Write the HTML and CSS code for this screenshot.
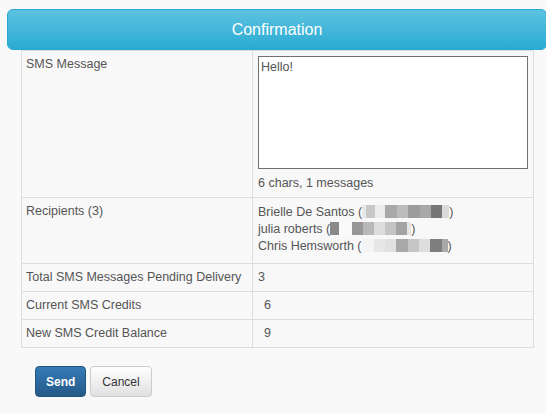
FILE: index.html
```html
<!DOCTYPE html>
<html>
<head>
<meta charset="utf-8">
<link rel="stylesheet" href="styles.css">
</head>
<body>
<div class="page">
  <div class="header">Confirmation</div>
  <table class="details">
    <tr>
      <td class="label">SMS Message</td>
      <td class="value">
        <textarea class="message">Hello!</textarea>
        <div class="count">6 chars, 1 messages</div>
      </td>
    </tr>
    <tr>
      <td class="label">Recipients (3)</td>
      <td class="value recipients">
        <div class="recipient">Brielle De Santos (<span class="blur"><i class="b1"></i><i class="b2"></i><i class="b3"></i><i class="b4"></i><i class="b5"></i><i class="b6"></i><i class="b7"></i><i class="b8"></i><i class="b9"></i></span>)</div>
        <div class="recipient">julia roberts (<span class="blur"><i class="j1"></i><i class="j2"></i><i class="j3"></i><i class="j4"></i><i class="j5"></i><i class="j6"></i><i class="j7"></i><i class="j8"></i></span>)</div>
        <div class="recipient">Chris Hemsworth (<span class="blur"><i class="c1"></i><i class="c2"></i><i class="c3"></i><i class="c4"></i><i class="c5"></i><i class="c6"></i><i class="c7"></i><i class="c8"></i></span>)</div>
      </td>
    </tr>
    <tr>
      <td class="label">Total SMS Messages Pending Delivery</td>
      <td class="value">3</td>
    </tr>
    <tr>
      <td class="label">Current SMS Credits</td>
      <td class="value indent">6</td>
    </tr>
    <tr>
      <td class="label">New SMS Credit Balance</td>
      <td class="value indent">9</td>
    </tr>
  </table>
  <div class="actions">
    <button class="btn btn-primary">Send</button>
    <button class="btn btn-default">Cancel</button>
  </div>
</div>
</body>
</html>
```

FILE: styles.css
```css
html, body {
  margin: 0;
  padding: 0;
  overflow: hidden;
  background: #f9f9f9;
}

.page {
  font-family: "Liberation Sans", Arial, sans-serif;
  font-size: 12.5px;
  line-height: 17px;
  color: #555;
  padding-top: 9px;
}

.header {
  margin-left: 7px;
  width: 540px;
  height: 41px;
  box-sizing: border-box;
  border: 1px solid #28a7cf;
  border-radius: 6px;
  background: linear-gradient(#5dc2e0, #2aabd3);
  color: #fff;
  font-size: 16px;
  line-height: 39px;
  text-align: center;
}

.details {
  margin-left: 21px;
  width: 513px;
  border-collapse: collapse;
  background: #f8f8f8;
}

.details td {
  border: 1px solid #ddd;
  padding: 5px;
  vertical-align: top;
}

.details td.label {
  width: 221px;
  padding-left: 4px;
}

.details td.indent {
  padding-left: 11px;
}

.details td.recipients {
  padding-top: 6px;
  padding-bottom: 8px;
}

.recipient {
  height: 17px;
  line-height: 17px;
}

.message {
  display: block;
  width: 100%;
  height: 113px;
  box-sizing: border-box;
  margin: 0 0 6px;
  padding: 2px;
  border: 1px solid #707070;
  background: #fff;
  font-family: "Liberation Sans", Arial, sans-serif;
  font-size: 12.5px;
  line-height: 17px;
  color: #555;
  resize: none;
}

.blur {
  display: inline-flex;
  vertical-align: -2px;
  height: 13px;
}

.blur i {
  display: block;
  height: 13px;
}

.b1 { width: 4px; background: #e9e9e9; }
.b2 { width: 9px; background: #c8c8c8; }
.b3 { width: 10px; background: #ededed; }
.b4 { width: 12px; background: #a9a9a9; }
.b5 { width: 11px; background: #bcbcbc; }
.b6 { width: 12px; background: #9c9c9c; }
.b7 { width: 11px; background: #a8a8a8; }
.b8 { width: 11px; background: #777; }
.b9 { width: 7px; background: #dadada; }

.j1 { width: 9px; background: #8a8a8a; }
.j2 { width: 13px; background: #fafafa; }
.j3 { width: 11px; background: #979797; }
.j4 { width: 11px; background: #b8b8b8; }
.j5 { width: 11px; background: #dcdcdc; }
.j6 { width: 11px; background: #c4c4c4; }
.j7 { width: 11px; background: #a3a3a3; }
.j8 { width: 4px; background: #e4e4e4; }

.c1 { width: 12px; background: #f4f4f4; }
.c2 { width: 11px; background: #e7e7e7; }
.c3 { width: 11px; background: #e1e1e1; }
.c4 { width: 12px; background: #a8a8a8; }
.c5 { width: 11px; background: #c6c6c6; }
.c6 { width: 11px; background: #dedede; }
.c7 { width: 12px; background: #7e7e7e; }
.c8 { width: 6px; background: #a9a9a9; }

.actions {
  display: flex;
  gap: 4px;
  margin: 18px 0 0 35px;
}

.btn {
  height: 31px;
  box-sizing: border-box;
  padding: 0 10px;
  border-radius: 4px;
  font-family: "Liberation Sans", Arial, sans-serif;
  font-size: 12px;
  cursor: pointer;
}

.btn-primary {
  border: 1px solid #245580;
  background: linear-gradient(#337ab7, #265a88);
  color: #fff;
  font-weight: bold;
}

.btn-default {
  border: 1px solid #ccc;
  background: linear-gradient(#fff, #e0e0e0);
  color: #333;
  padding: 0 11px;
  box-shadow: 0 1px 1px rgba(0,0,0,0.05);
}
```
